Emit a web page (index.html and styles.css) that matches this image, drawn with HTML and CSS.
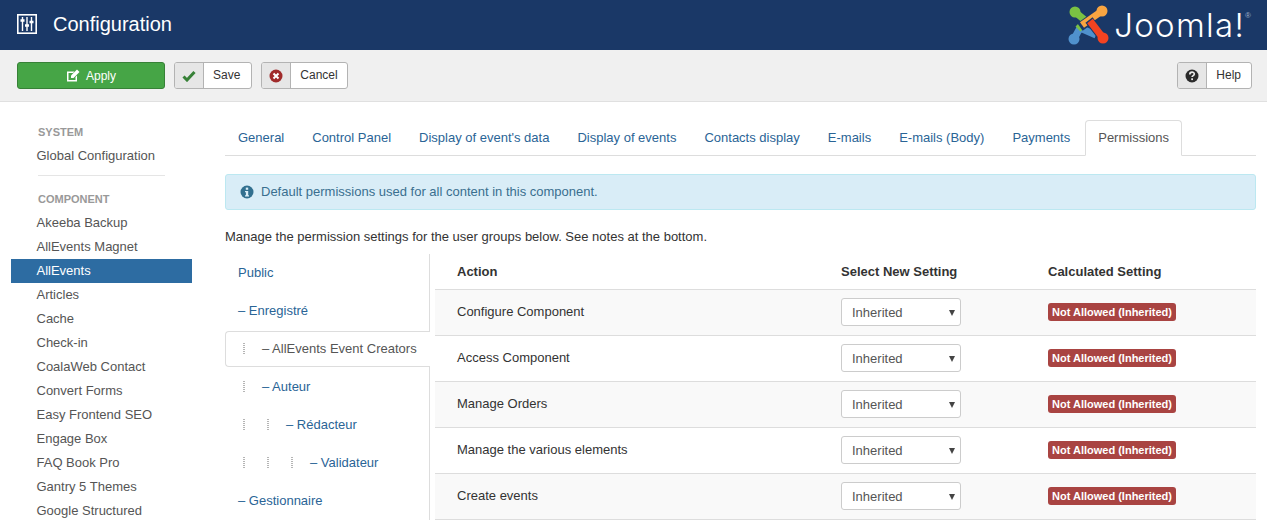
FILE: index.html
```html
<!DOCTYPE html>
<html lang="en">
<head>
  <meta charset="UTF-8" />
  <title>Configuration</title>
  <link rel="stylesheet" href="styles.css">
</head>
<body>
  <header class="topbar">
    <div class="page-title">
      <svg class="title-icon" width="20" height="20" viewBox="0 0 20 20">
        <rect x="0.800" y="0.800" width="18.400" height="18.400" fill="none" stroke="#fff" stroke-width="1.600"/>
        <path d="M5.500 3v14M10 3v14M14.500 3v14" stroke="#fff" stroke-width="1.400"/>
        <path d="M3.500 6.500h4M8 11.500h4M12.500 8h4" stroke="#fff" stroke-width="2.600"/>
      </svg>
      <h1>Configuration</h1>
    </div>
    <div class="logo">
      <svg width="44" height="44" viewBox="0 0 44 44">
        <g fill="none" stroke-width="7">
          <path d="M9 36L15 25 31 32" stroke="#5091cd"/>
          <path d="M10 9L21 18 13 26" stroke="#7ac143"/>
          <path d="M37 8L15 24" stroke="#1a3867" stroke-width="9"/>
          <path d="M37 8L17 22" stroke="#f9a541"/>
          <path d="M38 35L24 17" stroke="#1a3867" stroke-width="9"/>
          <path d="M38 35L25 18" stroke="#f44321"/>
        </g>
        <circle cx="10" cy="9" r="5.500" fill="#7ac143"/>
        <circle cx="37" cy="8" r="5.500" fill="#f9a541"/>
        <circle cx="9" cy="36" r="5.500" fill="#5091cd"/>
        <circle cx="38" cy="35" r="5.500" fill="#f44321"/>
      </svg>
      <span class="logo-text">Joomla!</span><sup class="logo-reg">®</sup>
    </div>
  </header>

  <div class="toolbar">
    <button class="btn btn-apply" type="button">
      <svg width="14" height="13" viewBox="0 0 14 13">
        <path d="M1 2.500h7.500L7 4H2.500v7h7V8l1.500-1.500V12.500H1z" fill="#fff"/>
        <path d="M5 6.500l6-6 2.500 2.500-6 6H5z" fill="#fff"/>
      </svg>
      Apply
    </button>
    <button class="btn btn-save" type="button">
      <span class="btn-icon">
        <svg width="14" height="12" viewBox="0 0 14 12"><path d="M1.500 6.500l3.500 3.500 7.500-8" fill="none" stroke="#378137" stroke-width="3"/></svg>
      </span>
      <span class="btn-label">Save</span>
    </button>
    <button class="btn btn-cancel" type="button">
      <span class="btn-icon">
        <svg width="14" height="14" viewBox="0 0 14 14">
          <circle cx="7" cy="7" r="6.500" fill="#a02b2b"/>
          <path d="M4.500 4.500l5 5M9.500 4.500l-5 5" stroke="#fff" stroke-width="2"/>
        </svg>
      </span>
      <span class="btn-label">Cancel</span>
    </button>
    <button class="btn btn-help" type="button">
      <span class="btn-icon">
        <svg width="14" height="14" viewBox="0 0 14 14">
          <circle cx="7" cy="7" r="6.500" fill="#2a2a2a"/>
          <path d="M4.800 5.400c0-3 4.500-3 4.500-.3 0 1.600-2.200 1.500-2.200 3" fill="none" stroke="#e8e8e8" stroke-width="1.700"/>
          <rect x="6.200" y="9.300" width="1.800" height="1.800" fill="#e8e8e8"/>
        </svg>
      </span>
      <span class="btn-label">Help</span>
    </button>
  </div>

  <div class="main">
    <aside class="sidebar">
      <div class="nav-head">SYSTEM</div>
      <a class="nav-item">Global Configuration</a>
      <div class="nav-divider"></div>
      <div class="nav-head">COMPONENT</div>
      <a class="nav-item">Akeeba Backup</a>
      <a class="nav-item">AllEvents Magnet</a>
      <a class="nav-item active">AllEvents</a>
      <a class="nav-item">Articles</a>
      <a class="nav-item">Cache</a>
      <a class="nav-item">Check-in</a>
      <a class="nav-item">CoalaWeb Contact</a>
      <a class="nav-item">Convert Forms</a>
      <a class="nav-item">Easy Frontend SEO</a>
      <a class="nav-item">Engage Box</a>
      <a class="nav-item">FAQ Book Pro</a>
      <a class="nav-item">Gantry 5 Themes</a>
      <a class="nav-item">Google Structured</a>
    </aside>

    <section class="content">
      <ul class="tabs">
        <li>General</li>
        <li>Control Panel</li>
        <li>Display of event's data</li>
        <li>Display of events</li>
        <li>Contacts display</li>
        <li>E-mails</li>
        <li>E-mails (Body)</li>
        <li>Payments</li>
        <li class="active">Permissions</li>
      </ul>

      <div class="alert">
        <svg width="14" height="14" viewBox="0 0 14 14">
          <circle cx="7" cy="7" r="6.500" fill="#32708f"/>
          <rect x="5.800" y="2.600" width="2.400" height="2.200" fill="#d9edf7"/>
          <path d="M5 6h3.200v4.200H9v1.200H5v-1.200h.9V7.200H5z" fill="#d9edf7"/>
        </svg>
        Default permissions used for all content in this component.
      </div>

      <p class="intro">Manage the permission settings for the user groups below. See notes at the bottom.</p>

      <div class="perms">
        <ul class="groups">
          <li><a>Public</a></li>
          <li><a>– Enregistré</a></li>
          <li class="active"><i class="lvl"></i><a>– AllEvents Event Creators</a></li>
          <li><i class="lvl"></i><a>– Auteur</a></li>
          <li><i class="lvl"></i><i class="lvl"></i><a>– Rédacteur</a></li>
          <li><i class="lvl"></i><i class="lvl"></i><i class="lvl"></i><a>– Validateur</a></li>
          <li><a>– Gestionnaire</a></li>
        </ul>

        <table class="perm-table">
          <thead>
            <tr><th class="col-action">Action</th><th class="col-select">Select New Setting</th><th>Calculated Setting</th></tr>
          </thead>
          <tbody>
            <tr>
              <td>Configure Component</td>
              <td><span class="select">Inherited</span></td>
              <td><span class="label-red">Not Allowed (Inherited)</span></td>
            </tr>
            <tr>
              <td>Access Component</td>
              <td><span class="select">Inherited</span></td>
              <td><span class="label-red">Not Allowed (Inherited)</span></td>
            </tr>
            <tr>
              <td>Manage Orders</td>
              <td><span class="select">Inherited</span></td>
              <td><span class="label-red">Not Allowed (Inherited)</span></td>
            </tr>
            <tr>
              <td>Manage the various elements</td>
              <td><span class="select">Inherited</span></td>
              <td><span class="label-red">Not Allowed (Inherited)</span></td>
            </tr>
            <tr>
              <td>Create events</td>
              <td><span class="select">Inherited</span></td>
              <td><span class="label-red">Not Allowed (Inherited)</span></td>
            </tr>
          </tbody>
        </table>
      </div>
    </section>
  </div>
</body>
</html>
```

FILE: styles.css
```css
* {
  box-sizing: border-box;
}

html, body {
  height: 522px;
  overflow: hidden;
}

body {
  margin: 0;
  font-family: "Liberation Sans", Arial, sans-serif;
  font-size: 13px;
  line-height: 18px;
  color: #333;
  background: #fff;
}

/* header */
.topbar {
  height: 50px;
  background: #1a3867;
  display: flex;
  justify-content: space-between;
  align-items: center;
  padding: 0 16px 0 17px;
  color: #fff;
}

.page-title {
  display: flex;
  align-items: center;
  gap: 16px;
  margin-top: -2px;
}

.page-title h1 {
  margin: 0;
  font-size: 20px;
  font-weight: 400;
  line-height: 24px;
}

.logo {
  display: flex;
  align-items: center;
  height: 50px;
}

.logo-text {
  font-family: Inter, "Liberation Sans", sans-serif;
  font-weight: 300;
  font-size: 33px;
  line-height: 40px;
  margin-left: 5px;
  letter-spacing: 1.300px;
}

.logo-reg {
  font-size: 8px;
  line-height: 8px;
  color: #9fb0c8;
  align-self: flex-start;
  margin-top: 12px;
}

/* toolbar */
.toolbar {
  height: 52px;
  background: #f0f0f0;
  border-bottom: 1px solid #e0e0e0;
  display: flex;
  align-items: center;
  gap: 9px;
  padding: 0 15px 0 17px;
}

.btn {
  display: flex;
  align-items: stretch;
  height: 27px;
  padding: 0;
  font-family: inherit;
  font-size: 12px;
  color: #333;
  background: #fff;
  border: 1px solid #b3b3b3;
  border-radius: 3px;
}

.btn-icon {
  width: 29px;
  display: flex;
  align-items: center;
  justify-content: center;
  background: #e6e6e6;
  border-right: 1px solid #b3b3b3;
  border-radius: 2px 0 0 2px;
}

.btn-label {
  padding: 0 10px 0 9px;
  line-height: 25px;
}

.btn-save .btn-label {
  padding-right: 11px;
}

.btn-cancel .btn-label {
  padding-right: 9px;
}

.btn-apply {
  width: 148px;
  align-items: center;
  justify-content: center;
  gap: 6px;
  color: #fff;
  background: #46a546;
  border-color: #378137;
}

.btn-help {
  margin-left: auto;
}

/* sidebar */
.main {
  display: flex;
}

.sidebar {
  width: 181px;
  margin-left: 11px;
  padding-top: 21px;
  flex-shrink: 0;
}

.nav-head {
  padding-left: 27px;
  margin-bottom: 3px;
  font-size: 11px;
  font-weight: 700;
  line-height: 18px;
  color: #999;
}

.nav-item {
  display: block;
  height: 24px;
  padding-left: 25.500px;
  line-height: 24px;
  color: #555;
}

.nav-item.active {
  background: #2d6ca2;
  color: #fff;
}

.nav-divider {
  height: 1px;
  margin: 7px 27px 14px 27px;
  background: #e5e5e5;
}

/* tabs */
.content {
  width: 1031px;
  margin-left: 33px;
  padding-top: 18px;
}

.tabs {
  display: flex;
  margin: 0;
  padding: 0;
  list-style: none;
  height: 36px;
  border-bottom: 1px solid #ddd;
  gap: 2px;
}

.tabs li {
  height: 36px;
  padding: 0 12px;
  line-height: 34px;
  color: #2a6496;
  border: 1px solid transparent;
  border-radius: 4px 4px 0 0;
}

.tabs li.active {
  color: #555;
  background: #fff;
  border-color: #ddd #ddd #fff;
}

.alert {
  display: flex;
  align-items: center;
  gap: 7px;
  height: 36px;
  margin-top: 18px;
  padding: 0 14px;
  color: #3a6f8f;
  background: #d9edf7;
  border: 1px solid #bce8f1;
  border-radius: 3px;
}

.intro {
  margin: 18px 0 0;
  line-height: 18px;
}

/* permissions */
.perms {
  display: flex;
  margin-top: 8px;
}

.groups {
  width: 205px;
  margin: 0;
  padding: 0;
  list-style: none;
  border-right: 1px solid #ddd;
  flex-shrink: 0;
}

.groups li {
  display: flex;
  align-items: center;
  height: 38px;
  padding-left: 13px;
  color: #2a6496;
}

.groups a {
  color: #2a6496;
}

.groups li.active {
  position: relative;
  width: 205px;
  height: 36px;
  margin: 1px 0;
  background: #fff;
  border: 1px solid #ddd;
  border-right: 0;
  border-radius: 4px 0 0 4px;
  padding-left: 12px;
}

.groups li.active a {
  color: #555;
}

.lvl {
  width: 24px;
  height: 12px;
  margin-left: 5px;
  margin-right: -5px;
  background: linear-gradient(#b5b5b5 50%, transparent 50%) 0 0 / 2px 2px repeat-y;
  flex-shrink: 0;
}

.perm-table {
  width: 821px;
  margin-left: 5px;
  height: 266px;
  border-collapse: collapse;
  align-self: flex-start;
}

.perm-table th {
  height: 35px;
  padding: 2px 0 0 1px;
  text-align: left;
  font-weight: 700;
  color: #333;
}

.perm-table th.col-action,
.perm-table td:first-child {
  width: 405px;
  padding-left: 22px;
}

.perm-table th,
.perm-table td {
  border-bottom: 1px solid #ddd;
}

.perm-table td {
  height: 46px;
  padding: 0 0 0 1px;
}

.perm-table .col-select {
  width: 207px;
}

.perm-table tbody tr:nth-child(odd) {
  background: #f9f9f9;
}

.select {
  position: relative;
  display: block;
  width: 120px;
  height: 28px;
  padding-left: 10px;
  line-height: 28px;
  color: #555;
  background: #fff;
  border: 1px solid #ccc;
  border-radius: 3px;
}

.select::after {
  content: "";
  position: absolute;
  right: 5px;
  top: 11px;
  border-left: 3px solid transparent;
  border-right: 3px solid transparent;
  border-top: 6px solid #444;
}

.label-red {
  display: inline-block;
  height: 18px;
  padding: 0 4px;
  font-size: 11px;
  font-weight: 700;
  line-height: 18px;
  color: #fff;
  background: #a94442;
  border-radius: 3px;
}
```
